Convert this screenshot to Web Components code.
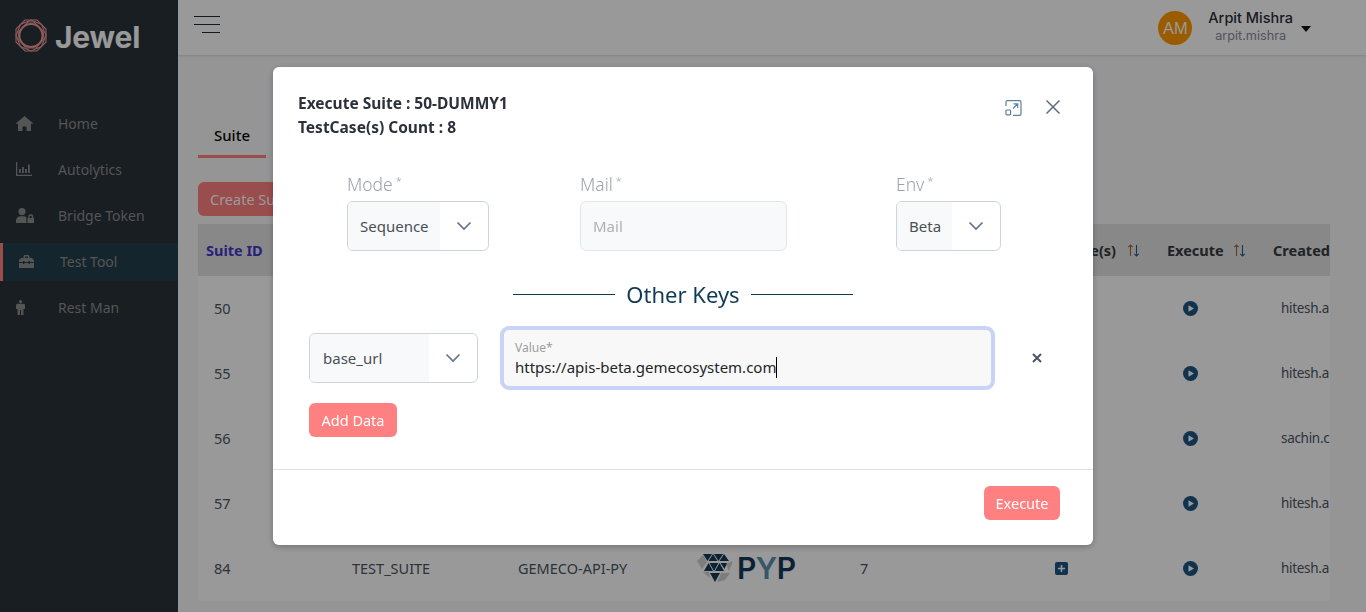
<!DOCTYPE html>
<html><head><meta charset="utf-8"><title>Jewel</title>
<style>
html,body{margin:0;height:100%;overflow:hidden;background:#f8f8fb;font-family:"Noto Sans",sans-serif;color:#333}
app-shell{height:612px}
</style></head><body>
<app-shell>
  <side-bar slot="side">
    <nav-item label="Home" icon="home"></nav-item>
    <nav-item label="Autolytics" icon="chart"></nav-item>
    <nav-item label="Bridge Token" icon="lock"></nav-item>
    <nav-item label="Test Tool" icon="tool" active></nav-item>
    <nav-item label="Rest Man" icon="man"></nav-item>
  </side-bar>
  <top-bar slot="top"></top-bar>
  <suite-tabs slot="main"></suite-tabs>
  <suite-table slot="main"></suite-table>
</app-shell>
<modal-overlay>
  <execute-dialog>
    <field-row slot="fields">
      <pick-field label="Mode" value="Sequence" fill="92" style="width:142px"></pick-field>
      <text-field label="Mail" placeholder="Mail" style="width:207px"></text-field>
      <pick-field label="Env" value="Beta" fill="55" style="width:105px"></pick-field>
    </field-row>
    <section-title slot="keys">Other Keys</section-title>
    <key-row slot="keys"></key-row>
  </execute-dialog>
</modal-overlay>

<script>
const def=(n,html,fn)=>customElements.define(n,class extends HTMLElement{connectedCallback(){if(this.shadowRoot)return;const s=this.attachShadow({mode:'open'});s.innerHTML=typeof html==='function'?html(this):html;fn&&fn(s,this)}});
const chev=`<svg width="16" height="10" viewBox="0 0 16 10" fill="none" stroke="#64748b" stroke-width="1.7"><path d="M1.5 1.5 8 8l6.5-6.5"/></svg>`;

def('app-shell',`<style>:host{display:grid;grid-template-columns:178px 1fr;grid-template-rows:55px 1fr;width:1366px;overflow:hidden}
::slotted([slot=side]){grid-row:1/3}.m{padding:0 36px 0 20px;overflow:hidden;min-width:0}</style>
<slot name="side"></slot><slot name="top"></slot><div class="m"><slot name="main"></slot></div>`);

def('side-bar',`<style>:host{display:block;background:#283339;height:612px;color:#fff}
.logo{display:flex;align-items:center;gap:8px;padding:19px 0 0 15px;height:33px}
.t{font:700 30px/33px Inter,sans-serif;letter-spacing:-.2px;color:#fff;margin-top:3px}
nav{display:flex;flex-direction:column;gap:8px;margin-top:53px}</style>
<div class="logo"><svg width="32" height="33" viewBox="0 0 32 33" fill="none" stroke="#ee9898" stroke-width="1.100">
<polygon points="10,1 22,1 31,10 31,23 22,32 10,32 1,23 1,10"/>
<polygon points="16,1 26.5,5.500 31,16.500 26.500,27.500 16,32 5.500,27.500 1,16.500 5.500,5.500"/>
<polygon points="13,3 19,3 28,12 29,20 21,29 11,29 3,20 4,12"/>
<circle cx="16" cy="16.500" r="11.500" stroke-width="1.800"/></svg><span class="t">Jewel</span></div>
<nav><slot></slot></nav>`);

const icons={
home:`<svg width="17" height="15" viewBox="0 0 17 15" fill="#8e8e8e"><path d="M8.500 0 17 7.300l-.8 1L15 7.300V15h-4.500v-4.600h-4V15H2V7.300L.8 8.300 0 7.300z"/></svg>`,
chart:`<svg width="16" height="14" viewBox="0 0 16 14" fill="#8e8e8e"><path d="M0 0h1.300v12.700H16V14H0z"/><rect x="3" y="7" width="1.800" height="4"/><rect x="6" y="5" width="1.800" height="6"/><rect x="9" y="7" width="1.800" height="4"/><rect x="12" y="2.500" width="1.800" height="8.500"/></svg>`,
lock:`<svg width="18" height="15" viewBox="0 0 18 15" fill="#8e8e8e"><circle cx="6" cy="3.600" r="3.600"/><path d="M0 15v-2.500C0 10 2 8.200 4.500 8.200h3c1.300 0 2.300.4 3 1V15z"/><path d="M11.500 15V10h.8V8.800a2.500 2.500 0 0 1 5 0V10h.7v5zm2-5h2.300V8.800a1.150 1.150 0 0 0-2.300 0z"/></svg>`,
tool:`<svg width="15" height="13" viewBox="0 0 15 13" fill="#8e8e8e"><path d="M4.500 3V1.500C4.500.7 5.200 0 6 0h3c.8 0 1.500.7 1.500 1.500V3H13l2 2.200V7h-4V6H9.500v1h-4V6H4v1H0V5.200L2 3zM6 3h3V1.500H6zM0 8h4v1h1.500V8h4v1H11V8h4v5H0z"/></svg>`,
man:`<svg width="9" height="15" viewBox="0 0 9 15" fill="#8e8e8e"><circle cx="4.500" cy="1.600" r="1.600"/><path d="M1.500 3.700h6c.8 0 1.500.7 1.500 1.500V9H7.500v6H5V10H4v5H1.500V9H0V5.200c0-.8.7-1.500 1.500-1.500z"/></svg>`};
def('nav-item',h=>{const a=h.hasAttribute('active');return `<style>:host{display:flex;align-items:center;height:38px;font-size:14px;color:#8e8e8e;box-sizing:border-box;
padding:0 0 2px 16px;${a?'background:#233f4c;border-left:3px solid #ff8080;':''}}
.i{width:${a?'41px':'42px'};display:flex;align-items:center}</style><span class="i">${icons[h.getAttribute('icon')]}</span><span>${h.getAttribute('label')}</span>`});

def('top-bar',`<style>:host{display:flex;align-items:center;background:#fff;height:55px;box-shadow:0 1px 2px rgba(0,0,0,.12);position:relative}
.b{display:flex;flex-direction:column;gap:6.500px;width:26px;margin-left:16px;align-items:flex-end;margin-top:-6px}
.b i{display:block;height:1.500px;background:#1f2937;width:100%}.b i:last-child{width:18px}
.u{margin-left:auto;display:flex;align-items:center;margin-right:55px}
.a{width:34px;height:34px;border-radius:50%;background:#ff9900;color:#fff;font:400 16.500px/34px "Liberation Sans",sans-serif;text-align:center}
.n{margin-left:16px;text-align:center}
.n b{display:block;font:500 14.500px/18px Inter,sans-serif;color:#2d2d38;margin-top:-1px}
.n s{display:block;text-decoration:none;font:400 12.700px/18px Inter,sans-serif;color:#8a8a9c}
.c{width:0;height:0;border:5.500px solid transparent;border-top:6px solid #111;margin:7px 0 0 8px}</style>
<div class="b"><i></i><i></i><i></i></div>
<div class="u"><div class="a">AM</div><div class="n"><b>Arpit Mishra</b><s>arpit.mishra</s></div><div class="c"></div></div>`);

def('suite-tabs',`<style>:host{display:block;padding-top:67px}
.t{display:inline-block;width:68px;height:36px;box-sizing:border-box;text-align:center;font:500 15px/26px "Noto Sans",sans-serif;color:#0b0b0b;border-bottom:3px solid #ff8080}
button{display:block;margin-top:24px;background:#ff8080;color:#fff;border:0;border-radius:6px;height:34px;width:130px;padding:0 12px;text-align:left;font:14.500px "Noto Sans",sans-serif}</style>
<div class="t">Suite</div><button>Create Suite</button>`);

const play=`<svg width="15" height="15" viewBox="0 0 15 15"><circle cx="7.500" cy="7.500" r="7.500" fill="#1f5680"/><path d="M5.500 4.200 11 7.500l-5.500 3.300z" fill="#fff"/></svg>`;
const sort=`<svg width="13" height="13" viewBox="0 0 13 13" fill="none" stroke-width="1.100"><path d="M3.500 12V1M1.300 3.200 3.500 1l2.200 2.200" stroke="#a2683c"/><path d="M9.500 1v11M7.300 9.800l2.200 2.200 2.200-2.200" stroke="#2a5a8a"/></svg>`;
const plus=`<svg width="13" height="13" viewBox="0 0 13 13"><rect width="13" height="13" rx="2" fill="#1f5680"/><path d="M6.500 3v7M3 6.500h7" stroke="#fff" stroke-width="1.500"/></svg>`;
const pyp=`<span class="pyp"><svg width="37" height="30" viewBox="0 0 37 30">
<g fill="#d0d0d0"><polygon points="0,8 6,2 10,9 5,16"/><polygon points="24,20 33,20 28,27 20,29"/><polygon points="6,19 12,19 13,25"/><polygon points="29,11 36,8 32,18"/></g>
<g fill="#123a57"><polygon points="6,1 15,1 10.500,8"/><polygon points="11.500,8 16,1 20.500,8"/><polygon points="17,1 26,1 21.500,8"/><polygon points="22.500,8 27,1 32,8"/>
<polygon points="7,18 11.500,10 16,18"/><polygon points="12.500,10 21.500,10 17,18"/><polygon points="18,18 22.500,10 27,18"/><polygon points="23.500,10 30,10 27.500,16"/>
<polygon points="13,20 23,20 18,29"/></g></svg><span class="w">P<em>Y</em>P</span></span>`;
const rows=[['50','hitesh.a'],['55','hitesh.a'],['56','sachin.c'],['57','hitesh.a'],['84','hitesh.a','TEST_SUITE','GEMECO-API-PY',pyp,'7']];
const cols='138px 166px 179px 163px 184px 131px 106px 65px';
def('suite-table',`<style>:host{display:block;width:1132px;overflow:hidden;margin-top:8px;font-size:14.500px;color:#4b5563}
.g{display:grid;grid-template-columns:${cols};white-space:nowrap}
.h{height:52px;background:#e3e3e3;align-items:center;font-weight:700;color:#343a40;font-size:14.500px}
.h>div{padding-left:8px;display:flex;align-items:center;gap:9px}.h>div:first-child{color:#4338ca}
.h>.tc{padding:0 19px 0 0;justify-content:flex-end;gap:11px}
.r{height:65px;align-items:center;background:#fff}.r>div{padding:0 0 2px 16px;display:flex;align-items:center}
.r>.ic{padding-bottom:0}.r>.cb{font-size:13.500px;letter-spacing:-.3px}
.pyp{display:flex;align-items:center;gap:3px}
.w{font:600 30px/30px Inter,sans-serif;letter-spacing:-.5px;color:#123a57}.w em{font-style:normal;color:#5d92b0}
</style>
<div class="g h"><div>Suite ID</div><div></div><div></div><div></div><div></div><div class="tc">TestCase(s) ${sort}</div><div>Execute ${sort}</div><div>Created</div></div>
${rows.map(r=>`<div class="g r"><div>${r[0]}</div><div>${r[2]||''}</div><div>${r[3]||''}</div><div>${r[4]||''}</div><div>${r[5]||''}</div><div class="ic" style="padding-left:27px">${r[0]=='84'?plus:''}</div><div class="ic" style="padding-left:24px">${play}</div><div class="cb">${r[1]}</div></div>`).join('')}`);

def('modal-overlay',`<style>:host{position:fixed;inset:0;background:rgba(0,0,0,.4);display:flex;justify-content:center;align-items:flex-start;padding-top:67px;box-sizing:border-box}</style><slot></slot>`);

def('execute-dialog',`<style>:host{display:block;width:820px;height:478px;background:#fff;border-radius:6px;box-shadow:0 2px 6px rgba(0,0,0,.25);color:#343a40;overflow:hidden}
.top{display:flex;justify-content:space-between;padding:24px 33px 0 25px;height:82px}
.ti{font:700 15.500px/24px "Noto Sans",sans-serif;color:#2b303a}
.ic{display:flex;gap:24px;margin-top:9px;height:16px}
.keys{padding:0 0 0 36px;margin-top:28px}
.foot{border-top:1px solid #dee2e6;margin-top:32px;display:flex;justify-content:flex-end;padding:16px 33px 0 0}
button{background:#ff8080;color:#fff;border:0;border-radius:6px;height:34px;width:76px;font:14.500px "Noto Sans",sans-serif;padding:0}</style>
<div class="top"><div class="ti">Execute Suite : 50-DUMMY1<br>TestCase(s) Count : 8</div>
<div class="ic"><svg width="17" height="16" viewBox="0 0 17 16" fill="none" stroke="#5f7f9f" stroke-width="1.200"><path d="M1 6V2a1.400 1.400 0 0 1 1.400-1.400h12.200A1.400 1.400 0 0 1 16 2v12a1.400 1.400 0 0 1-1.400 1.400H8"/><rect x="1" y="10" width="4.600" height="4.800" rx=".8"/><path d="M8 8.500l4.500-4.500M8.500 3.800h4.200v4.200"/></svg>
<svg width="14" height="14" viewBox="0 0 14 14" fill="none" stroke="#5d6b7c" stroke-width="1.500"><path d="M.5.500l13 13M13.500.500l-13 13"/></svg></div></div>
<slot name="fields"></slot>
<div class="keys"><slot name="keys"></slot></div>
<div class="foot"><button>Execute</button></div>`);

def('field-row',`<style>:host{display:grid;grid-template-columns:142px 207px 105px;column-gap:91px;padding-left:74px;align-items:end}::slotted(:last-child){margin-left:18px}</style><slot></slot>`);

const fieldCss=`:host{display:block}.l{font:300 17.500px/22px "Noto Sans",sans-serif;color:#9ca3ad;display:block;margin-bottom:6px}.l sup{font-size:11px;line-height:0;margin-left:3px;vertical-align:6px}
.b{height:50px;box-sizing:border-box;border:1px solid #ced4da;border-radius:6px;display:flex;align-items:center;overflow:hidden;font-size:15px;color:#495057}`;
def('pick-field',h=>`<style>${fieldCss}.v{background:#f8f9fa;height:100%;display:flex;align-items:center;padding-left:12px;box-sizing:border-box;width:${h.getAttribute('fill')}px}.x{flex:1;display:flex;justify-content:center}</style>
<span class="l">${h.getAttribute('label')}<sup>*</sup></span><div class="b"><span class="v">${h.getAttribute('value')}</span><span class="x">${chev}</span></div>`);
def('text-field',h=>`<style>${fieldCss}.b{background:#f8f9fa;border-color:#e2e5e9;padding-left:12px;color:#adb0b5}</style>
<span class="l">${h.getAttribute('label')}<sup>*</sup></span><div class="b">${h.getAttribute('placeholder')}</div>`);

def('section-title',`<style>:host{display:flex;align-items:center;justify-content:center;gap:11px;font:400 22px/30px "Noto Sans",sans-serif;color:#0f3a56;width:748px;margin-bottom:17px}i{display:block;width:102px;height:1px;background:#0f3a56}</style><i></i><span><slot></slot></span><i></i>`);

def('key-row',`<style>:host{display:block;font-size:15px;color:#495057}
.r{display:flex;align-items:center;height:64px}
.s{width:169px;height:50px;box-sizing:border-box;border:1px solid #ced4da;border-radius:6px;display:flex;align-items:center;overflow:hidden}
.v{width:119px;height:100%;background:#f8f9fa;display:flex;align-items:center;padding-left:13px;box-sizing:border-box}.x{flex:1;display:flex;justify-content:center}
.i{margin-left:22px;width:495px;height:64px;box-sizing:border-box;border:4px solid #c9d3f8;border-radius:9px;background:#f8f8f8;padding:10px 0 0 11px}
.i small{display:block;font-size:12px;line-height:16px;color:#9a9ea3}.i span{display:inline-block;line-height:21px;color:#212529;border-right:1px solid #000;font-size:15px;margin-top:1px}
.d{margin-left:37px;display:flex}
button{display:block;margin-top:13px;background:#ff8080;color:#fff;border:0;border-radius:6px;height:34px;width:88px;font:14.500px "Noto Sans",sans-serif;padding:0}</style>
<div class="r"><div class="s"><span class="v">base_url</span><span class="x">${chev}</span></div>
<div class="i"><small>Value*</small><span>https://apis-beta.gemecosystem.com</span></div>
<div class="d"><svg width="10" height="10" viewBox="0 0 10 10" fill="none" stroke="#4b5563" stroke-width="2"><path d="M1 1l8 8M9 1 1 9"/></svg></div></div>
<button>Add Data</button>`);
</script>
</body></html>
